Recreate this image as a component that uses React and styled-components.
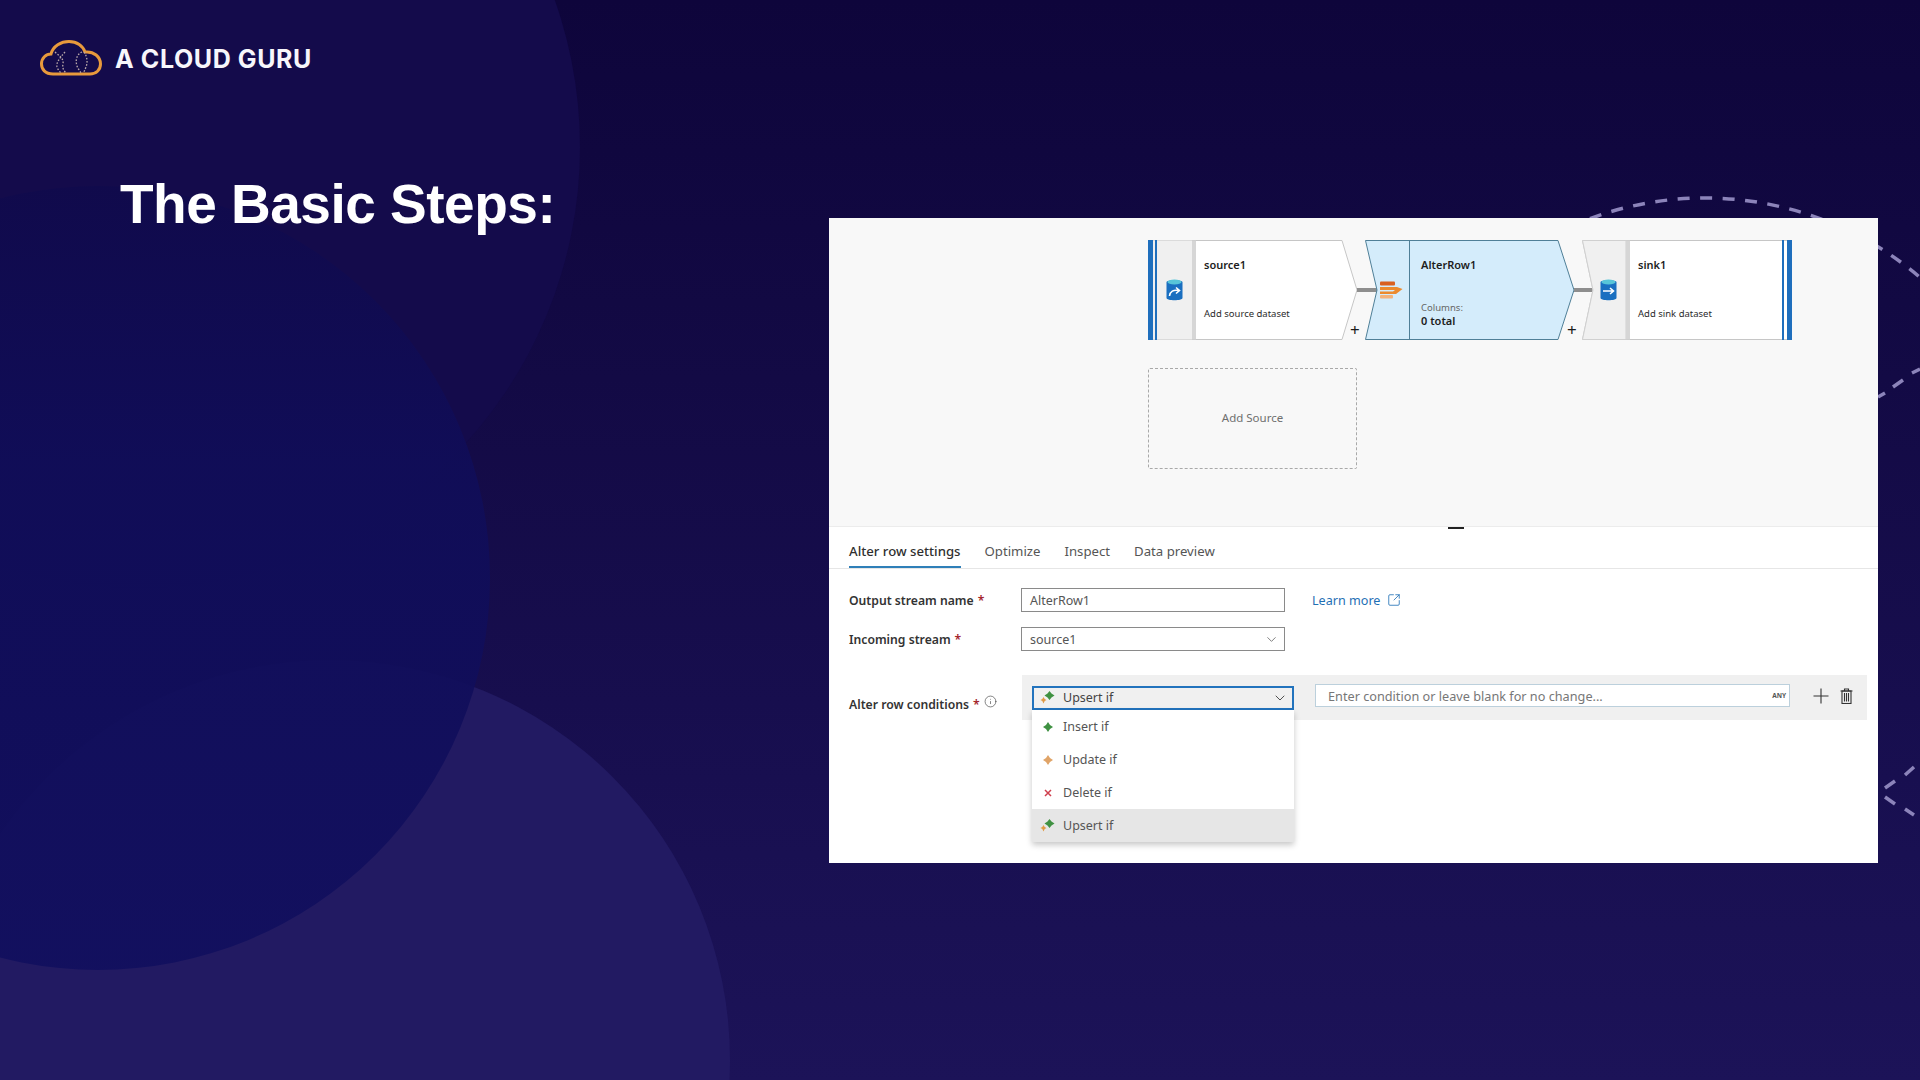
import React from 'react'
import styled, { createGlobalStyle } from 'styled-components'
import { ChevronDown, SquareArrowOutUpRight, Info } from 'lucide-react'

const GlobalStyle = createGlobalStyle`
  html, body {
    margin: 0;
    padding: 0;
    background: #140c4f;
  }
  * {
    box-sizing: border-box;
  }
`

const Page = styled.div`
  position: relative;
  width: 1920px;
  height: 1080px;
  overflow: hidden;
  background: linear-gradient(180deg, #0e053b 0%, #130a45 35%, #170e4e 65%, #1c1358 100%);
  font-family: 'Noto Sans', 'Open Sans', sans-serif;
`
const Backdrop = styled.svg`
  position: absolute;
  inset: 0;
`
const Content = styled.div`
  position: relative;
  display: flex;
  flex-direction: column;
`
const Header = styled.header`
  display: flex;
  align-items: center;
  gap: 13px;
  padding: 40px 0 0 40px;
`
const Brand = styled.span`
  position: relative;
  top: 1px;
  font-family: Inter, 'Noto Sans', sans-serif;
  font-size: 25px;
  font-weight: 700;
  letter-spacing: 0.6px;
  color: #f7f6fb;
`
const Main = styled.main`
  display: grid;
  grid-template-columns: 829px 1049px;
  margin-top: 142px;
`
const Title = styled.h1`
  margin: -49px 0 0 120px;
  font-family: 'Liberation Sans', Arial, sans-serif;
  font-size: 55px;
  line-height: 70px;
  font-weight: 700;
  letter-spacing: -0.5px;
  color: #ffffff;
  white-space: nowrap;
`
const Panel = styled.section`
  position: relative;
  height: 645px;
  background: #ffffff;
  color: #333;
`
const Canvas = styled.div`
  height: 308px;
  padding: 22px 0 0 319px;
  background: #f8f8f8;
`
const NodeRow = styled.div`
  display: flex;
  gap: 7px;
`
const Node = styled.div`
  position: relative;
  width: 210px;
  height: 100px;
  display: grid;
  grid-template-columns: 52px 1fr;
`
const NodeShape = styled.svg`
  position: absolute;
  inset: 0;
`
const NodeIcon = styled.div`
  position: relative;
  display: flex;
  align-items: center;
  justify-content: center;
`
const NodeText = styled.div`
  position: relative;
  display: flex;
  flex-direction: column;
  padding: 17px 0 0 4px;
`
const NodeName = styled.div`
  font-size: 11px;
  line-height: 16px;
  font-weight: 600;
  color: #1d1d1d;
`
const NodeNote = styled.div`
  margin-top: auto;
  margin-bottom: 19px;
  font-size: 9.5px;
  line-height: 14px;
  color: #2b2b2b;
`
const ColumnsLabel = styled.div`
  margin-top: auto;
  font-size: 9.5px;
  line-height: 13px;
  color: #666;
`
const ColumnsTotal = styled.div`
  margin-bottom: 12px;
  font-size: 11px;
  line-height: 14px;
  font-weight: 600;
  color: #1d1d1d;
`
const Connector = styled.div`
  position: absolute;
  left: 209px;
  top: 48px;
  width: 20px;
  height: 4px;
  background: #8e8e8e;
`
const AddNode = styled.div`
  position: absolute;
  left: 202px;
  top: 82px;
  font-size: 17px;
  line-height: 16px;
  color: #1b1b1b;
`
const AddSource = styled.div`
  width: 209px;
  height: 101px;
  margin-top: 28px;
  padding-bottom: 2px;
  display: flex;
  align-items: center;
  justify-content: center;
  border: 1px dashed #a9a9a9;
  border-radius: 2px;
  font-size: 11.5px;
  color: #6f6f6f;
`
const Grip = styled.div`
  position: absolute;
  left: 619px;
  top: 309px;
  width: 16px;
  height: 2px;
  background: #222;
`
const Tabs = styled.nav`
  display: flex;
  gap: 24px;
  height: 43px;
  padding: 0 0 0 20px;
  border-top: 1px solid #ececec;
  border-bottom: 1px solid #e6e6e6;
`
const Tab = styled.div`
  height: 41px;
  padding-top: 15px;
  font-size: 13.2px;
  line-height: 18px;
  font-weight: ${(p) => (p.$active ? 500 : 400)};
  color: ${(p) => (p.$active ? '#2f2f2f' : '#555')};
  border-bottom: 2px solid ${(p) => (p.$active ? '#2f7fb8' : 'transparent')};
`
const Form = styled.div`
  display: flex;
  flex-direction: column;
  padding: 19px 11px 0 20px;
`
const Row = styled.div`
  display: grid;
  grid-template-columns: 172px 264px auto;
  align-items: center;
  height: 24px;
  margin-bottom: 15px;
`
const Label = styled.label`
  font-size: 12.2px;
  font-weight: 600;
  color: #333;
  white-space: nowrap;
`
const Required = styled.span`
  margin-left: 4px;
  color: #a4262c;
`
const TextBox = styled.div`
  display: flex;
  align-items: center;
  justify-content: space-between;
  height: 24px;
  padding: 0 5px 0 8px;
  border: 1px solid #8a8a8a;
  font-size: 12.5px;
  color: #555;
`
const LearnMore = styled.a`
  display: flex;
  align-items: center;
  gap: 7px;
  margin-left: 27px;
  font-size: 12.6px;
  color: #1f6fb5;
`
const ConditionRow = styled.div`
  display: grid;
  grid-template-columns: 173px 1fr;
  margin-top: 9px;
`
const ConditionLabel = styled(Label)`
  display: flex;
  align-items: center;
  padding-top: 13px;
`
const InfoMark = styled.span`
  display: flex;
  margin: -6px 0 0 4px;
  color: #444;
`
const ConditionBox = styled.div`
  position: relative;
  display: flex;
  align-items: center;
  height: 45px;
  padding-left: 10px;
  background: #f0f0f0;
`
const Select = styled.div`
  display: flex;
  align-items: center;
  width: 262px;
  height: 24px;
  padding: 0 4px 0 6px;
  border: 2px solid #2273bd;
  background: #f0f0f0;
  font-size: 12.5px;
  color: #444;
`
const SelectText = styled.span`
  flex: 1;
  margin-left: 8px;
`
const ExpressionBox = styled.div`
  display: flex;
  align-items: center;
  justify-content: space-between;
  width: 475px;
  height: 23px;
  margin: 0 0 4px 21px;
  padding: 0 3px 0 12px;
  border: 1px solid #bcd0dc;
  background: #ffffff;
  font-size: 12.7px;
  color: #777;
`
const AnyTag = styled.span`
  font-size: 6.5px;
  font-weight: 700;
  color: #555;
`
const Actions = styled.div`
  display: flex;
  align-items: center;
  gap: 11px;
  margin: 0 0 4px 23px;
`
const Menu = styled.div`
  position: absolute;
  left: 10px;
  top: 35px;
  width: 262px;
  background: #ffffff;
  box-shadow: 0 3px 6px rgba(0, 0, 0, 0.22);
`
const MenuItem = styled.div`
  display: grid;
  grid-template-columns: 31px 1fr;
  align-items: center;
  height: 33px;
  font-size: 12.5px;
  color: #555;
  background: ${(p) => (p.$active ? '#e6e6e6' : '#ffffff')};
`
const MenuIcon = styled.span`
  display: flex;
  justify-content: center;
`

const CloudLogo = () => (
  <svg width="62" height="36" viewBox="0 0 62 36" fill="none">
    <path
      d="M13 34 C5 34 1.5 29 1.5 24 C1.5 18 6 14 11 14 C13 6 21 1.5 29 1.5 C37 1.5 43 6 45 12 C54 11 60.5 17 60.5 24 C60.5 30 56 34 50 34 Z"
      stroke="#e89a3c"
      strokeWidth="3"
    />
    <g stroke="#b9a7a8" strokeWidth="1.3" strokeDasharray="1.6 1.6">
      <path d="M15 12 C19 16 24 18 23 24 C22 28 24 31 26 33" />
      <path d="M25 12 C20 18 16 22 17 27 C18 30 20 32 21 33" />
      <path d="M42 12 C37 14 35 20 37 26 C38 29 40 31 41 33" />
      <path d="M44 12 C47 16 48 22 46 27 C45 30 44 32 43 33" />
    </g>
  </svg>
)

const DbIcon = ({ kind }) => (
  <svg width="17" height="22" viewBox="0 0 17 22">
    <path d="M0.5 3 C0.5 0.5 16.5 0.5 16.5 3 V19 C16.5 22 0.5 22 0.5 19 Z" fill="#1a6fc0" />
    <ellipse cx="8.5" cy="3" rx="7" ry="2.4" fill="#58c5d8" />
    {kind === 'source' ? (
      <path d="M3.5 17 C4 12.5 7.5 10.5 12.5 11.5 M10 8.5 L13.5 11.5 L10 14.5" stroke="#fff" strokeWidth="1.6" fill="none" />
    ) : (
      <path d="M3 12 H13 M10 9 L13.5 12 L10 15" stroke="#fff" strokeWidth="1.6" fill="none" />
    )}
  </svg>
)

const AlterIcon = () => (
  <svg width="23" height="18" viewBox="0 0 23 18">
    <rect x="0" y="0.5" width="15" height="4" rx="1" fill="#d9601f" />
    <path d="M0 6 H17 L22.5 8 L16 13 H0 V10.5 H13 L15 9 H0 Z" fill="#ec8a2d" />
    <rect x="0" y="14" width="13" height="3.5" rx="1" fill="#f4b27a" />
  </svg>
)

const Diamond = ({ color, size }) => (
  <svg width={size} height={size} viewBox="0 0 10 10">
    <path d="M5 0 L7 3 L10 5 L7 7 L5 10 L3 7 L0 5 L3 3 Z" fill={color} />
  </svg>
)

const Cross = () => (
  <svg width="8" height="8" viewBox="0 0 8 8">
    <path d="M1 1 L7 7 M7 1 L1 7" stroke="#cf3f4d" strokeWidth="1.5" />
  </svg>
)

const UpsertIcon = () => (
  <svg width="15" height="13" viewBox="0 0 15 13">
    <path d="M9.5 0 L11.5 2.5 L14.5 4.5 L11.5 6.5 L9.5 9 L7.5 6.5 L4.5 4.5 L7.5 2.5 Z" fill="#3f9142" />
    <path d="M3.5 6 L4.7 8 L6.5 9 L4.7 10 L3.5 12.5 L2.3 10 L0.5 9 L2.3 8 Z" fill="#e09a45" />
  </svg>
)

const PlusIcon = () => (
  <svg width="16" height="16" viewBox="0 0 16 16">
    <path d="M8 0.5 V15.5 M0.5 8 H15.5" stroke="#333" strokeWidth="1.1" />
  </svg>
)

const TrashIcon = () => (
  <svg width="13" height="16" viewBox="0 0 13 16" fill="none" stroke="#333" strokeWidth="1.1">
    <path d="M0.5 3 H12.5 M4.5 3 V1 H8.5 V3" />
    <rect x="2" y="3" width="9" height="12.5" />
    <path d="M4.5 5 V13.5 M6.5 5 V13.5 M8.5 5 V13.5" />
  </svg>
)

const menuItems = [
  { label: 'Insert if', icon: <Diamond color="#3f9142" size={10} /> },
  { label: 'Update if', icon: <Diamond color="#e0a468" size={10} /> },
  { label: 'Delete if', icon: <Cross /> },
  { label: 'Upsert if', icon: <UpsertIcon />, active: true },
]

const App = () => (
  <Page>
    <GlobalStyle />
    <Backdrop width="1920" height="1080" viewBox="0 0 1920 1080">
      <defs>
        <linearGradient id="blueDisc" x1="0" y1="0" x2="0" y2="1">
          <stop offset="0" stopColor="#100a4c" />
          <stop offset="0.35" stopColor="#100d58" />
          <stop offset="1" stopColor="#110f5e" />
        </linearGradient>
      </defs>
      <circle cx="139" cy="147" r="441" fill="#140b4b" />
      <circle cx="330" cy="1060" r="400" fill="#221a62" />
      <circle cx="98" cy="578" r="392" fill="url(#blueDisc)" fillOpacity="0.92" />
      <path
        d="M1500 269 A331 331 0 0 1 1920 277.4"
        fill="none"
        stroke="#8c84ba"
        strokeWidth="3.5"
        strokeDasharray="12 10.5"
        strokeDashoffset="8.9"
      />
      <g stroke="#8c84ba" strokeWidth="3.5">
        <path d="M1878 397 L1885 393 M1893 387 L1903 380 M1912 373 L1920 369" />
        <path d="M1885 788 L1895 781 M1905 775 L1914 767 M1885 797 L1895 804 M1905 809 L1914 815" />
      </g>
    </Backdrop>
    <Content>
      <Header>
        <CloudLogo />
        <Brand>A CLOUD GURU</Brand>
      </Header>
      <Main>
        <Title>The Basic Steps:</Title>
        <Panel>
          <Canvas>
            <NodeRow>
              <Node>
                <NodeShape width="210" height="100" viewBox="0 0 210 100">
                  <path d="M0.5 0.5 H194 L209 50 L194 99.5 H0.5 Z" fill="#fff" stroke="#c6c6c6" />
                  <rect x="0" y="0.5" width="44" height="99" fill="#f0f0f0" />
                  <rect x="44" y="0.5" width="4" height="99" fill="#d6d6d6" />
                  <rect x="0" y="0" width="5" height="100" fill="#1f6fbd" />
                  <rect x="7" y="0" width="2" height="100" fill="#1f6fbd" />
                </NodeShape>
                <NodeIcon>
                  <DbIcon kind="source" />
                </NodeIcon>
                <NodeText>
                  <NodeName>source1</NodeName>
                  <NodeNote>Add source dataset</NodeNote>
                </NodeText>
                <Connector />
                <AddNode>+</AddNode>
              </Node>
              <Node>
                <NodeShape width="210" height="100" viewBox="0 0 210 100">
                  <path d="M0.5 0.5 H193 L209 50 L193 99.5 H0.5 L12 50 Z" fill="#d4ecfb" stroke="#4f7f97" />
                  <path d="M44.5 0.5 V99.5" stroke="#4f7f97" />
                </NodeShape>
                <NodeIcon>
                  <AlterIcon />
                </NodeIcon>
                <NodeText>
                  <NodeName>AlterRow1</NodeName>
                  <ColumnsLabel>Columns:</ColumnsLabel>
                  <ColumnsTotal>0 total</ColumnsTotal>
                </NodeText>
                <Connector />
                <AddNode>+</AddNode>
              </Node>
              <Node>
                <NodeShape width="210" height="100" viewBox="0 0 210 100">
                  <path d="M0.5 0.5 H209.5 V99.5 H0.5 L11 50 Z" fill="#fff" stroke="#c6c6c6" />
                  <path d="M0.5 0.5 H44 V99.5 H0.5 L11 50 Z" fill="#f0f0f0" stroke="#d0d0d0" />
                  <rect x="44" y="0.5" width="4" height="99" fill="#d6d6d6" />
                  <rect x="200" y="0" width="2" height="100" fill="#1f6fbd" />
                  <rect x="205" y="0" width="5" height="100" fill="#1f6fbd" />
                </NodeShape>
                <NodeIcon>
                  <DbIcon kind="sink" />
                </NodeIcon>
                <NodeText>
                  <NodeName>sink1</NodeName>
                  <NodeNote>Add sink dataset</NodeNote>
                </NodeText>
              </Node>
            </NodeRow>
            <AddSource>Add Source</AddSource>
          </Canvas>
          <Grip />
          <Tabs>
            <Tab $active>Alter row settings</Tab>
            <Tab>Optimize</Tab>
            <Tab>Inspect</Tab>
            <Tab>Data preview</Tab>
          </Tabs>
          <Form>
            <Row>
              <Label>
                Output stream name<Required>*</Required>
              </Label>
              <TextBox>AlterRow1</TextBox>
              <LearnMore>
                Learn more <SquareArrowOutUpRight size={14} strokeWidth={1.4} />
              </LearnMore>
            </Row>
            <Row>
              <Label>
                Incoming stream<Required>*</Required>
              </Label>
              <TextBox>
                source1
                <ChevronDown size={15} strokeWidth={1.2} />
              </TextBox>
            </Row>
            <ConditionRow>
              <ConditionLabel>
                Alter row conditions<Required>*</Required>
                <InfoMark>
                  <Info size={13} strokeWidth={1.2} />
                </InfoMark>
              </ConditionLabel>
              <ConditionBox>
                <Select>
                  <UpsertIcon />
                  <SelectText>Upsert if</SelectText>
                  <ChevronDown size={16} strokeWidth={1.4} />
                </Select>
                <ExpressionBox>
                  Enter condition or leave blank for no change...
                  <AnyTag>ANY</AnyTag>
                </ExpressionBox>
                <Actions>
                  <PlusIcon />
                  <TrashIcon />
                </Actions>
                <Menu>
                  {menuItems.map((item) => (
                    <MenuItem key={item.label} $active={item.active}>
                      <MenuIcon>{item.icon}</MenuIcon>
                      {item.label}
                    </MenuItem>
                  ))}
                </Menu>
              </ConditionBox>
            </ConditionRow>
          </Form>
        </Panel>
      </Main>
    </Content>
  </Page>
)

export default App
